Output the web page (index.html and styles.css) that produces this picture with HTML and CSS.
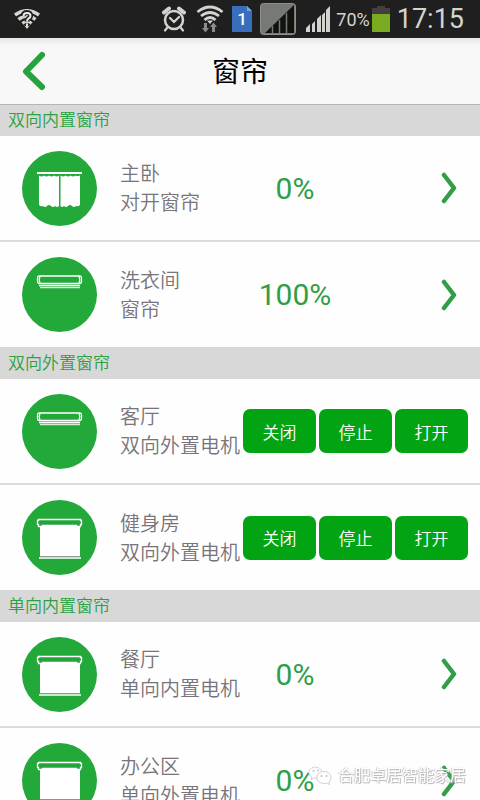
FILE: index.html
```html
<!DOCTYPE html>
<html lang="zh-CN">
<head>
<meta charset="utf-8">
<meta name="viewport" content="width=device-width, initial-scale=1">
<title>窗帘</title>
<link rel="stylesheet" href="styles.css">
</head>
<body>
<svg class="defs" aria-hidden="true">
  <symbol id="curtain" viewBox="0 0 75 75">
    <path d="M15 21h45v2H15z" fill="#fff"/>
    <path d="M17 24.500q3 2 5 0q3 2 5 0q3 2 5 0q3 2 5 0V55q-2 2-4 0q-2 2-4 0q-2-2-4 0q-2 2-4 0q-2 1-4-1zM38.500 24.500q3 2 5 0q3 2 5 0q3 2 5 0q2 1 4.500 0V54q-2 2-4 1q-2 2-4 0q-2-2-4 0q-2 2-4 0q-2 2-3.500 0z" fill="#fff"/>
  </symbol>
  <symbol id="raised" viewBox="0 0 75 75">
    <path d="M17 19h41q1.500 0 1.500 2v3q0 2.500-1.500 2.500H17q-1.500 0-1.500-2.500v-3q0-2 1.500-2zM18 19q-1.500 4 0 7M57 19q1.500 4 0 7" fill="none" stroke="#fff" stroke-width="1.300"/>
    <path d="M17 28.500h41" stroke="#fff" stroke-width="1.500"/>
    <path d="M18 30.500h40" stroke="#fff" stroke-width="1.500" opacity=".8"/>
  </symbol>
  <symbol id="lowered" viewBox="0 0 75 75">
    <path d="M18 26h40v31H18z" fill="#fff"/>
    <path d="M18 56.500h40" stroke="#8a9a8c"/>
    <path d="M17 58h42" stroke="#fff" stroke-width="1.500"/>
    <path d="M16.500 19.500h42v1h1v4h-1v2h-4v-1h-34v1h-4v-2h-1v-4h1z" fill="#23a43b" stroke="#fff" stroke-width="1.300"/>
  </symbol>
  <symbol id="chevron" viewBox="0 0 16 32">
    <path d="M3 3L13 16L3 29" fill="none" stroke="#2f9e46" stroke-width="4.500" stroke-linecap="round" stroke-linejoin="round"/>
  </symbol>
</svg>

<div class="status">
  <svg class="status-lead" width="26" height="20" viewBox="0 0 26 20" aria-hidden="true">
    <g fill="none" stroke="#d6d6d2" stroke-width="3.500">
      <path d="M1 6Q13-2.500 25 6"/>
      <path d="M4.500 10.500Q13 3.500 21.500 10.500" />
      <path d="M8.500 14.500Q13 10.500 17.500 14.500"/>
    </g>
    <path d="M10 16h6l-3 4z" fill="#d6d6d2"/>
    <path d="M9 7Q9.500 3.500 13 3.500T16.500 7Q16.500 8.500 14.500 9.500Q13 10.500 13 12.500M13 14.500v2.500" fill="none" stroke="#1f1f1f" stroke-width="5"/>
    <path d="M9.500 7Q9.500 4 13 4T16.500 7Q16.500 8.500 14.500 9.500Q13 10.500 13 12.500M13 14.500v2.500" fill="none" stroke="#eaeae6" stroke-width="2"/>
  </svg>
  <svg class="alarm" width="24" height="26" viewBox="0 0 24 26" aria-hidden="true">
    <g fill="none" stroke="#d3d3cf" stroke-linecap="round">
      <circle cx="12" cy="14" r="9" stroke-width="2.500"/>
      <path d="M8 12l4 4l5-5M5 22l-2 2.500M19 22l2 2.500" stroke-width="2.200"/>
      <path d="M2 6.500L7 2.500M22 6.500L17 2.500" stroke-width="4"/>
    </g>
  </svg>
  <svg class="wifi" width="28" height="28" viewBox="0 0 28 28" aria-hidden="true">
    <g fill="none" stroke="#d3d3cf" stroke-width="2.800">
      <path d="M1.500 7Q14-3 26.500 7M5 11Q14 4 23 11M8.500 15Q14 10 19.500 15"/>
    </g>
    <path d="M11 15.500h6L14 19z" fill="#d3d3cf"/>
    <path d="M8 18h3v5h2l-3.500 4.500L6 23h2zM16 27h3v-5h2l-3.500-4.500L14 22h2z" fill="#8b8b88"/>
  </svg>
  <svg class="sim" width="20" height="26" viewBox="0 0 20 26" role="img" aria-label="SIM">
    <path d="M0 0h15l5 5v21H0z" fill="#376fbd"/>
    <path d="M15 0v5h5z" fill="#7ba3d8"/>
    <text x="10" y="19" class="sim-number">1</text>
  </svg>
  <svg class="signal-box" width="36" height="32" viewBox="0 0 36 32" aria-hidden="true">
    <rect x=".5" y=".5" width="35" height="31" rx="3" fill="#777975" stroke="#8f918d"/>
    <path d="M5 30L34 2V30z" fill="#11130f"/>
    <path d="M12.500 23v7M19.500 17v13M26.500 10v20" stroke="#777975" stroke-width="1.500"/>
  </svg>
  <svg class="signal" width="24" height="26" viewBox="0 0 24 26" aria-hidden="true">
    <path d="M0 22l4-4v8H0zM6 18l3-3v11H6zM11 13l4-4v17h-4zM16 9l3-3v20h-3zM20 4l4-4v26h-4z" fill="#d3d3cf"/>
  </svg>
  <span class="charge">70%</span>
  <svg class="battery" width="18" height="26" viewBox="0 0 18 26" aria-hidden="true">
    <path d="M5 0h8v2h5v7H0V2h5z" fill="#443e3e"/>
    <path d="M0 8h18v18H0z" fill="#7aaa22"/>
  </svg>
  <time class="clock">17:15</time>
</div>

<header class="bar">
  <button class="back" aria-label="返回">
    <svg width="24" height="40" viewBox="0 0 24 40" aria-hidden="true">
      <path d="M20 4L4 20.500L20 36" fill="none" stroke="#27a33d" stroke-width="6" stroke-linecap="round" stroke-linejoin="round"/>
    </svg>
  </button>
  <h1>窗帘</h1>
</header>

<main>
  <section>
    <h2>双向内置窗帘</h2>
    <ul>
      <li class="row">
        <svg class="disc" aria-hidden="true"><use href="#curtain"/></svg>
        <p class="name">主卧<br>对开窗帘</p>
        <a class="detail" href="#" aria-label="主卧"><span class="value">0%</span><svg class="chevron"><use href="#chevron"/></svg></a>
      </li>
      <li class="row">
        <svg class="disc" aria-hidden="true"><use href="#raised"/></svg>
        <p class="name">洗衣间<br>窗帘</p>
        <a class="detail" href="#" aria-label="洗衣间"><span class="value">100%</span><svg class="chevron"><use href="#chevron"/></svg></a>
      </li>
    </ul>
  </section>
  <section>
    <h2>双向外置窗帘</h2>
    <ul>
      <li class="row">
        <svg class="disc" aria-hidden="true"><use href="#raised"/></svg>
        <p class="name">客厅<br>双向外置电机</p>
        <div class="actions"><button>关闭</button><button>停止</button><button>打开</button></div>
      </li>
      <li class="row">
        <svg class="disc" aria-hidden="true"><use href="#lowered"/></svg>
        <p class="name">健身房<br>双向外置电机</p>
        <div class="actions"><button>关闭</button><button>停止</button><button>打开</button></div>
      </li>
    </ul>
  </section>
  <section>
    <h2>单向内置窗帘</h2>
    <ul>
      <li class="row">
        <svg class="disc" aria-hidden="true"><use href="#lowered"/></svg>
        <p class="name">餐厅<br>单向内置电机</p>
        <a class="detail" href="#" aria-label="餐厅"><span class="value">0%</span><svg class="chevron"><use href="#chevron"/></svg></a>
      </li>
      <li class="row">
        <svg class="disc" aria-hidden="true"><use href="#lowered"/></svg>
        <p class="name">办公区<br>单向外置电机</p>
        <a class="detail" href="#" aria-label="办公区"><span class="value">0%</span><svg class="chevron"><use href="#chevron"/></svg></a>
      </li>
    </ul>
  </section>
</main>

<div class="watermark">
  <svg width="24" height="20" viewBox="0 0 24 20" aria-hidden="true">
    <g fill="#fff" stroke="#d3cfd4">
      <path d="M8 1C3.500 1 1 3.500 1 6.500q0 3 2.500 4.500L3 13.500l3-1.500q5 1 8-2q2-7-6-9z"/>
      <path d="M16 5.500c-4.500 0-7 2.500-7 6s3 6 7 6q1.500 0 2.500-.5l3 1.500l-.5-2.500q2-2 2-4.500c0-3.500-3-6-7-6z"/>
    </g>
    <g fill="#c5c1c6"><circle cx="5.500" cy="5" r="1"/><circle cx="10" cy="4.500" r="1"/><circle cx="13.500" cy="10" r="1"/><circle cx="18.500" cy="10" r="1"/></g>
  </svg>
  <span>合肥卓居智能家居</span>
</div>
</body>
</html>
```
FILE: styles.css
```css
* { box-sizing: border-box; }

body {
  margin: 0;
  height: 100vh;
  display: flex;
  flex-direction: column;
  overflow: hidden;
  background: #fefefe;
  font-family: Roboto, "Noto Sans CJK SC", sans-serif;
  font-weight: 300;
}

h1, h2, p, ul { margin: 0; padding: 0; font-weight: inherit; }
ul { list-style: none; }
button { border: 0; padding: 0; font: inherit; }
.defs { display: none; }

.status {
  flex: none;
  height: 38px;
  padding: 0 16px 0 14px;
  display: flex;
  align-items: center;
  background: #1f1f1f;
  color: #d3d3cf;
}
.status-lead { margin-right: auto; }
.wifi { margin-left: 10px; }
.sim { margin-left: 8px; }
.signal-box { margin-left: 8px; }
.signal { margin-left: 10px; }
.charge { margin-left: 6px; font-size: 18px; font-weight: 400; }
.battery { margin-left: 2px; }
.clock { margin-left: 7px; font-size: 27px; font-weight: 400; }
.sim-number { fill: #fff; font-size: 17px; font-weight: 500; text-anchor: middle; }

.bar {
  flex: none;
  height: 67px;
  padding: 0 22px;
  display: grid;
  grid-template-columns: 28px 1fr 28px;
  align-items: center;
  border-bottom: 1px solid #b4b4b4;
  background: linear-gradient(#e6e6e6, #f8f8f8 8px);
}
.back { height: 40px; background: none; }
.back svg { display: block; }
h1 {
  padding-top: 4px;
  color: #000;
  font-size: 28px;
  font-weight: 400;
  line-height: 40px;
  text-align: center;
}

main { flex: 1; min-height: 0; overflow: hidden; }

section + section { border-top: 1px solid #d9d8d9; }

h2 {
  padding-left: 8px;
  background: #d9d8d9;
  color: #2ba142;
  font-size: 17px;
  font-weight: 350;
  line-height: 31px;
}

.row {
  height: 104px;
  padding: 0 12px 0 22px;
  display: grid;
  grid-template-columns: 75px 120px 1fr;
  column-gap: 23px;
  align-items: center;
}
.row + .row { height: 107px; border-top: 2px solid #dcdadd; }

.disc {
  width: 75px;
  height: 75px;
  border-radius: 50%;
  background: #23a83a;
}
.name {
  padding-top: 2px;
  color: #77747a;
  font-size: 20px;
  font-weight: 350;
  line-height: 29px;
  white-space: nowrap;
}

.detail, .actions { margin-left: -20px; display: flex; align-items: center; }
.detail {
  justify-content: space-between;
  padding-right: 11px;
  color: #2f9e46;
  text-decoration: none;
}
.value { width: 104px; font-size: 30px; font-weight: 400; text-align: center; }
.chevron { width: 16px; height: 32px; }

.actions { gap: 3px; }
.actions button {
  flex: 1;
  height: 44px;
  border-radius: 7px;
  background: #02a413;
  color: #fff;
  font-size: 17px;
  font-weight: 350;
}

.watermark {
  position: fixed;
  right: 14px;
  bottom: 12px;
  display: flex;
  align-items: center;
  gap: 6px;
  color: #fff;
  font-size: 16px;
  font-weight: 400;
  line-height: 24px;
  text-shadow: 1px 1px 1px #b5b1b6, -1px 0 1px #c4c0c6;
}
```
